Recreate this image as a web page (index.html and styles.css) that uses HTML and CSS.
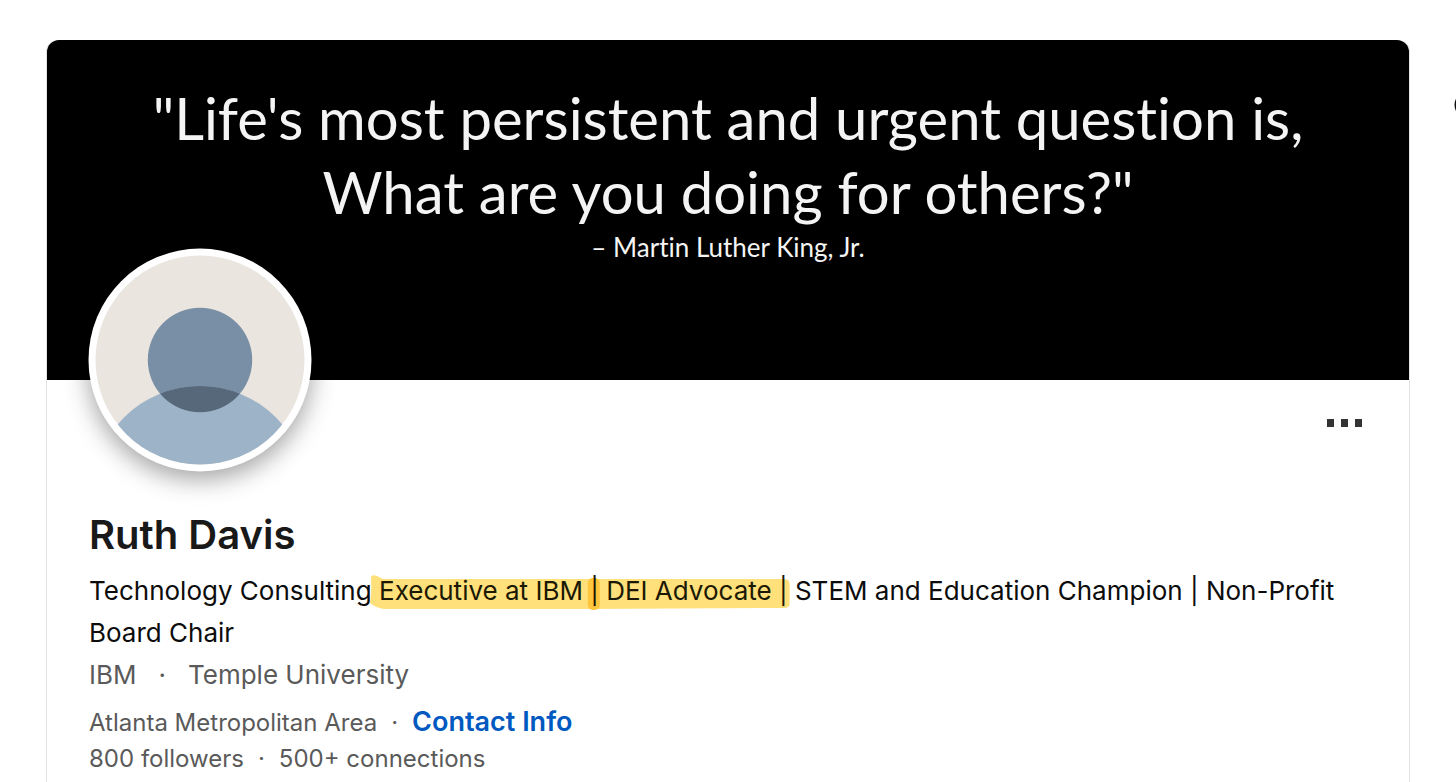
FILE: index.html
```html
<!DOCTYPE html>
<html lang="en">
<head>
<meta charset="utf-8">
<title>Ruth Davis</title>
<link rel="stylesheet" href="styles.css">
</head>
<body>
<main class="card">
  <header class="banner">
    <p class="quote">"Life's most persistent and urgent question is,<br>What are you doing for others?"</p>
    <p class="author">– Martin Luther King, Jr.</p>
  </header>
  <section class="profile">
    <div class="top">
      <svg class="avatar" viewBox="0 0 224 224" role="img" aria-label="Profile photo">
        <defs><clipPath id="disc"><circle cx="112" cy="112" r="104.500"/></clipPath>
        <clipPath id="head"><circle cx="112" cy="112" r="52.200"/></clipPath></defs>
        <circle cx="112" cy="112" r="111.500" fill="#fff"/>
        <g clip-path="url(#disc)">
          <rect width="224" height="224" fill="#eae5df"/>
          <circle cx="112" cy="112" r="52.200" fill="#788fa5"/>
          <circle cx="112" cy="245.500" r="107.500" fill="#9db3c8"/>
          <g clip-path="url(#head)"><circle cx="112" cy="245.500" r="107.500" fill="#56687a"/></g>
        </g>
      </svg>
      <button class="more" aria-label="More actions"><i></i><i></i><i></i></button>
    </div>
    <h1 class="name">Ruth Davis</h1>
    <p class="headline">Technology Consulting <mark class="mark"><svg class="marker" viewBox="0 0 420 36" preserveAspectRatio="none" aria-hidden="true"><path d="M1 3Q2 0 7 2L13 5H414Q420 5 420 10V30Q420 34 414 34L215 35H14Q6 34 0 29Q2 16 1 3Z" fill="#ffe07a"/><rect x="218" y="4" width="12" height="32" rx="5" fill="#ffc53d"/></svg>Executive at IBM | DEI Advocate |</mark> STEM and Education Champion | Non-Profit Board Chair</p>
    <p class="orgs"><span>IBM</span><span>·</span><span>Temple University</span></p>
    <p class="meta place"><span>Atlanta Metropolitan Area</span><span>·</span><a class="contact" href="#contact">Contact Info</a></p>
    <p class="meta"><span>800 followers</span><span>·</span><span>500+ connections</span></p>
  </section>
</main>
<svg class="edge" viewBox="0 0 2 24" aria-hidden="true"><circle cx="14" cy="12" r="13.500" fill="#111"/></svg>
</body>
</html>
```
FILE: styles.css
```css
* { box-sizing: border-box; }
body { position: relative; margin: 0; padding: 40px 46px 0; background: #fff; font-family: Inter, sans-serif; color: #0c0c0c; overflow-x: hidden; }
p, h1 { margin: 0; }
.card { border: 1px solid #e2e2e2; border-top: 0; border-bottom: 0; border-radius: 12px 12px 0 0; min-height: calc(100vh - 40px); }
.banner { min-height: 340px; padding-top: 41px; background: #000; border-radius: 12px 12px 0 0; color: #f4f4f4; text-align: center; font-family: Lato, sans-serif; font-variant-ligatures: none; }
.quote { font-size: 58px; line-height: 74px; }
.author { margin-top: 2px; font-size: 26px; line-height: 32px; }
.profile { padding: 0 42px; }
.top { display: flex; justify-content: space-between; align-items: flex-start; }
.avatar { width: 224px; height: 224px; margin: -132px 0 0 -1px; filter: drop-shadow(0 8px 12px rgba(0,0,0,.36)); }
.more { display: flex; gap: 7px; margin: 31px -3px 0 0; padding: 8px; border: 0; background: none; }
.more i { width: 7px; height: 8px; background: #333; }
.name { margin-top: 38px; font-size: 40px; line-height: 50px; font-weight: 600; color: #191919; }
.headline { margin-top: 10px; font-size: 26px; line-height: 42px; }
.mark { position: relative; z-index: 0; background: none; color: #1b1804; }
.marker { position: absolute; z-index: -1; left: -9px; top: -1px; width: calc(100% + 11px); height: 36px; }
.orgs { display: flex; gap: 22px; font-size: 26px; line-height: 42px; color: #5a5a5a; }
.meta { display: flex; align-items: baseline; gap: 14px; font-size: 24px; line-height: 36px; color: #5a5a5a; }
.place { margin-top: 8px; }
.contact { color: #0059c0; font-size: 27px; font-weight: 600; text-decoration: none; }
.edge { position: absolute; top: 93px; right: 0; width: 2px; height: 24px; }
```
